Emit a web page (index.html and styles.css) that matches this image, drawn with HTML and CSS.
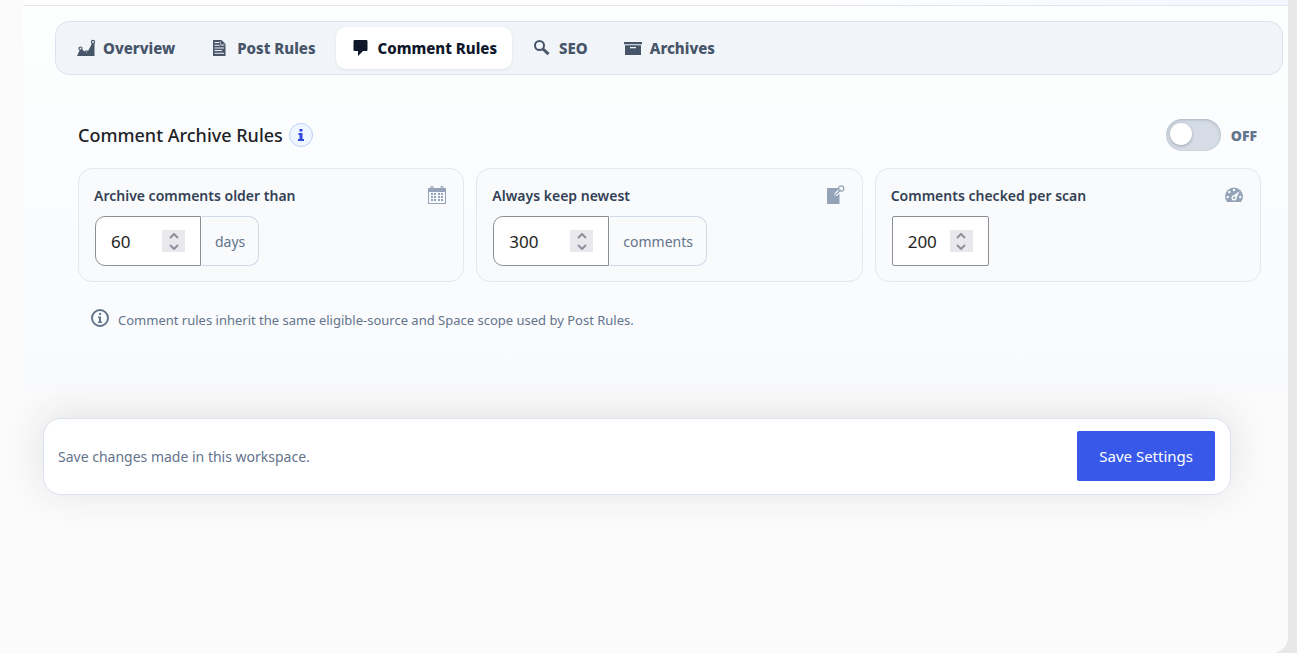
FILE: index.html
```html
<!DOCTYPE html>
<html lang="en">
<head>
    <meta charset="UTF-8">
    <meta name="viewport" content="width=device-width, initial-scale=1.0">
    <title>Comment Rules</title>
    <link rel="stylesheet" href="styles.css">
</head>
<body>
    <main class="page">
        <div class="workspace">
            <div class="workspace-top"></div>

            <nav class="tabs">
                <a class="tab" href="#overview">
                    <svg class="icon" viewBox="0 0 20 20"><path d="M1 18 4 11.500 6 11.500 11 15 16 5.500H18.500V18Z"/><circle class="dot" cx="4.500" cy="10.500" r="1.500"/><circle class="dot" cx="10.500" cy="14" r="1.200"/><circle class="dot" cx="17" cy="4" r="1.600"/></svg>
                    Overview
                </a>
                <a class="tab" href="#post-rules">
                    <svg class="icon" viewBox="0 0 20 20"><path fill-rule="evenodd" d="M3 2H11.500L15.500 6V18H3Z M4.500 4V5H9.500V4Z M4.500 6.800V7.800H9.500V6.800Z M11 3V6.500H14.500V7.500H10.500V3Z M4.500 9.500V10.500H14V9.500Z M4.500 12V13H12V12Z M4.500 14.800V15.800H14V14.800Z"/></svg>
                    Post Rules
                </a>
                <a class="tab tab-active" href="#comment-rules">
                    <svg class="icon" viewBox="0 0 20 20"><path d="M4 2H15C16 2 16.500 2.500 16.500 3.500V11.500C16.500 12.500 16 13 15 13H12L7 18V13H4C3 13 2.500 12.500 2.500 11.500V3.500C2.500 2.500 3 2 4 2Z"/></svg>
                    Comment Rules
                </a>
                <a class="tab" href="#seo">
                    <svg class="icon" viewBox="0 0 20 20"><circle class="ring" cx="7.500" cy="7.500" r="4.500"/><path class="handle" d="M11 11 16.500 16.200"/></svg>
                    SEO
                </a>
                <a class="tab" href="#archives">
                    <svg class="icon" viewBox="0 0 20 20"><path fill-rule="evenodd" d="M1 4H19V6.200H1Z M2 7.200H18V17H2Z M7 9V10.300H13V9Z"/></svg>
                    Archives
                </a>
            </nav>

            <section class="rules">
                <header class="rules-header">
                    <div class="heading">
                        <h2>Comment Archive Rules</h2>
                        <button class="info" type="button" aria-label="About comment rules"><svg viewBox="0 0 12 14"><path d="M4.500 1H7.500V3.500H4.500Z M3.500 5H7.500V11H9V13H3V11H4.500V7H3.500Z"/></svg></button>
                    </div>
                    <label class="switch">
                        <input type="checkbox">
                        <span class="switch-text">OFF</span>
                    </label>
                </header>

                <div class="cards">
                    <div class="card">
                        <div class="card-head">
                            <label for="olderThan">Archive comments older than</label>
                            <svg class="icon" viewBox="0 0 20 20"><path fill-rule="evenodd" d="M1 3H19V19H1Z M2 7V18H18V7Z"/><path d="M4 8H6V10H4Z M7 8H9V10H7Z M11 8H13V10H11Z M14 8H16V10H14Z M4 11H6V13H4Z M7 11H9V13H7Z M11 11H13V13H11Z M14 11H16V13H14Z M4 14H6V16H4Z M7 14H9V16H7Z M11 14H13V16H11Z M14 14H16V16H14Z"/><path class="thin" d="M4 4.500V1.500H6V4.500 M14 4.500V1.500H16V4.500"/></svg>
                        </div>
                        <div class="field">
                            <div class="number has-unit">
                                <input type="number" id="olderThan" value="60" min="1">
                                <div class="stepper">
                                    <button type="button" class="up" aria-label="Increase days"><svg viewBox="0 0 10 6"><path d="M1 5 5 1 9 5"/></svg></button>
                                    <button type="button" class="down" aria-label="Decrease days"><svg viewBox="0 0 10 6"><path d="M1 1 5 5 9 1"/></svg></button>
                                </div>
                            </div>
                            <span class="unit">days</span>
                        </div>
                    </div>

                    <div class="card">
                        <div class="card-head">
                            <label for="keepNewest">Always keep newest</label>
                            <svg class="icon" viewBox="0 0 20 20"><path d="M1 3H13.500L8.500 8.500 8.500 11 11 11 13.500 8.500V19H1Z"/><path class="pin" d="M9 10.500 14.500 5"/><circle class="pin" cx="15.200" cy="3.500" r="2.600"/></svg>
                        </div>
                        <div class="field">
                            <div class="number number-wide has-unit">
                                <input type="number" id="keepNewest" value="300" min="0">
                                <div class="stepper">
                                    <button type="button" class="up" aria-label="Increase comments kept"><svg viewBox="0 0 10 6"><path d="M1 5 5 1 9 5"/></svg></button>
                                    <button type="button" class="down" aria-label="Decrease comments kept"><svg viewBox="0 0 10 6"><path d="M1 1 5 5 9 1"/></svg></button>
                                </div>
                            </div>
                            <span class="unit">comments</span>
                        </div>
                    </div>

                    <div class="card">
                        <div class="card-head">
                            <label for="perScan">Comments checked per scan</label>
                            <svg class="icon" viewBox="0 0 20 20"><path d="M3 17Q1 14.500 1 11.500A9 9 0 0 1 19 11.500Q19 14.500 17 17Z"/><g class="cut"><circle cx="10" cy="5" r="1.200"/><circle cx="5.300" cy="7" r="1.200"/><circle cx="3.700" cy="12" r="1.200"/><circle cx="16.300" cy="12" r="1.200"/><path fill-rule="evenodd" d="M15.500 6.300 12.600 12.500A2.600 2.600 0 1 1 9.700 10.300Z M10 11.500A1.200 1.200 0 1 0 10 13.900 1.200 1.200 0 1 0 10 11.500Z"/></g></svg>
                        </div>
                        <div class="field">
                            <div class="number number-small">
                                <input type="number" id="perScan" value="200" min="1">
                                <div class="stepper">
                                    <button type="button" class="up" aria-label="Increase comments checked"><svg viewBox="0 0 10 6"><path d="M1 5 5 1 9 5"/></svg></button>
                                    <button type="button" class="down" aria-label="Decrease comments checked"><svg viewBox="0 0 10 6"><path d="M1 1 5 5 9 1"/></svg></button>
                                </div>
                            </div>
                        </div>
                    </div>
                </div>

                <p class="note">
                    <svg class="icon" viewBox="0 0 20 20"><circle class="note-ring" cx="10" cy="10" r="8"/><path d="M9 5H11V7H9Z M8 8.500H11V13.500H12V15H8V13.500H9V10H8Z"/></svg>
                    <span>Comment rules inherit the same eligible-source and Space scope used by Post Rules.</span>
                </p>
            </section>
        </div>

        <div class="save-bar">
            <span>Save changes made in this workspace.</span>
            <button class="save" type="submit">Save Settings</button>
        </div>
    </main>

    <script>
        document.querySelectorAll('.number').forEach(function (box) {
            var input = box.querySelector('input');
            box.querySelector('.up').onclick = function () { input.stepUp(); };
            box.querySelector('.down').onclick = function () { input.stepDown(); };
        });
    </script>
</body>
</html>
```
FILE: styles.css
```css
* {
    box-sizing: border-box;
}

body {
    margin: 0;
    font-family: "Noto Sans", "Open Sans", sans-serif;
    font-size: 14px;
    color: #64748b;
    background: #e8e8e8;
}

.page {
    min-height: 100vh;
    margin-right: 9px;
    background: #fbfbfb;
    border-bottom-right-radius: 16px;
}

.workspace {
    margin-left: 23px;
    padding-bottom: 56px;
    background: linear-gradient(#fdfefe, #f9fafd);
}

.workspace-top {
    height: 6px;
    background: linear-gradient(90deg, #ffffff 60%, #f4f6ff);
    border-bottom: 1px solid #e2e6f0;
}

.tabs {
    display: flex;
    gap: 5px;
    margin: 15px 5px 0 32px;
    padding: 5px;
    background: #f1f4f9;
    border: 1px solid #dbe3ee;
    border-radius: 14px;
}

.tab {
    display: flex;
    align-items: center;
    gap: 7px;
    height: 42px;
    padding: 0 15px;
    border-radius: 10px;
    color: #475569;
    font-size: 15px;
    font-weight: 800;
    text-decoration: none;
}

.tab-active {
    background: #fff;
    color: #0f172a;
    box-shadow: 0 1px 3px rgba(15, 23, 42, 0.08);
}

.icon {
    flex: none;
    width: 20px;
    height: 20px;
    fill: currentColor;
}

.dot,
.ring,
.handle,
.thin,
.pin {
    fill: none;
    stroke: currentColor;
    stroke-width: 1.2;
}

.dot {
    fill: #f1f4f9;
}

.ring {
    stroke-width: 2;
}

.handle {
    stroke-width: 3;
}

.thin {
    stroke-width: 1;
}

.cut {
    fill: #f8fafc;
}

.rules {
    padding: 44px 27px 0 55px;
}

.rules-header {
    display: flex;
    justify-content: space-between;
    align-items: center;
    height: 32px;
}

.heading {
    display: flex;
    align-items: center;
    gap: 6px;
}

h2 {
    margin: 0;
    font-size: 18px;
    font-weight: 500;
    color: #1d2327;
}

.info {
    display: grid;
    place-items: center;
    width: 24px;
    height: 24px;
    padding: 0;
    background: #eff6ff;
    border: 1px solid #bfd0fb;
    border-radius: 50%;
}

.info svg {
    width: 12px;
    height: 14px;
    fill: #2f46dc;
}

.switch {
    display: flex;
    align-items: center;
    gap: 10px;
    padding-right: 4px;
    font-size: 14px;
    font-weight: 900;
}

.switch input {
    appearance: none;
    width: 55px;
    height: 32px;
    margin: 0;
    padding: 4px;
    background: #d5dce5;
    border-radius: 16px;
    box-shadow: inset 0 1px 3px rgba(71, 85, 105, 0.3);
}

.switch input::before {
    content: "";
    display: block;
    width: 22px;
    height: 22px;
    background: #fff;
    border-radius: 50%;
    box-shadow: 0 1px 3px rgba(15, 23, 42, 0.3);
}

.switch input:checked {
    background: #3858e9;
}

.switch input:checked::before {
    margin-left: auto;
}

.cards {
    display: grid;
    grid-template-columns: repeat(3, 1fr);
    gap: 12px;
    margin-top: 17px;
}

.card {
    padding: 15px;
    background: #f8fafc;
    border: 1px solid #e2e8f0;
    border-radius: 14px;
}

.card-head {
    display: flex;
    justify-content: space-between;
    align-items: center;
    height: 22px;
    padding-right: 1px;
    color: #94a3b8;
}

.card-head label {
    font-weight: 600;
    color: #334155;
}

.field {
    display: flex;
    gap: 1px;
    height: 50px;
    margin: 10px 1px 0;
}

.number {
    display: flex;
    align-items: center;
    width: 106px;
    padding: 0 15px;
    background: #fff;
    border: 1px solid #8c8f94;
    border-radius: 2px;
}

.number-wide {
    width: 116px;
}

.number-small {
    width: 97px;
}

.has-unit {
    border-radius: 10px 0 0 10px;
}

.number input {
    flex: 1;
    min-width: 0;
    padding: 0;
    border: 0;
    outline: 0;
    background: none;
    font-family: inherit;
    font-size: 17px;
    color: #1e1e1e;
    appearance: textfield;
}

.number input::-webkit-inner-spin-button {
    appearance: none;
}

.stepper {
    display: flex;
    flex-direction: column;
    width: 23px;
    height: 22px;
    background: #e9e8ed;
}

.stepper button {
    display: grid;
    place-items: center;
    flex: 1;
    padding: 0;
    border: 0;
    background: none;
}

.stepper svg {
    width: 10px;
    height: 6px;
    fill: none;
    stroke: #8f8f9d;
    stroke-width: 2;
}

.unit {
    display: flex;
    align-items: center;
    padding: 0 13px;
    border: 1px solid #d0d9e6;
    border-left: 0;
    border-radius: 0 10px 10px 0;
}

.note {
    display: flex;
    align-items: flex-start;
    gap: 8px;
    margin: 24px 0 0;
    padding: 2px 12px;
    font-size: 13px;
    line-height: 24px;
}

.note-ring {
    fill: none;
    stroke: currentColor;
    stroke-width: 2;
}

.save-bar {
    position: relative;
    display: flex;
    justify-content: space-between;
    align-items: center;
    margin: 28px 57px 0 43px;
    padding: 12px 15px 13px 14px;
    background: #fff;
    border: 1px solid #dbe3ee;
    border-radius: 18px;
    box-shadow: 0 -4px 40px rgba(30, 41, 40, 0.12);
}

.save {
    height: 50px;
    padding: 0 22px;
    background: #3858e9;
    border: 0;
    border-radius: 2px;
    color: #fff;
    font-family: inherit;
    font-size: 15px;
}
```
